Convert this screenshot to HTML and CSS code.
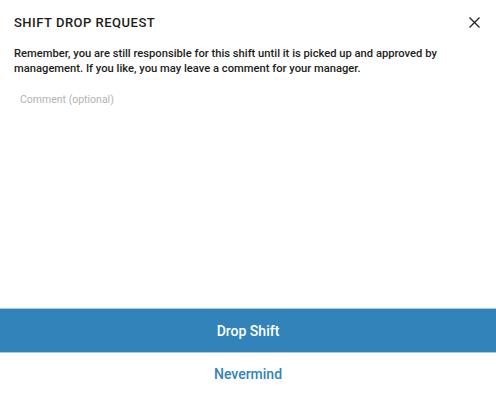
FILE: index.html
```html
<!DOCTYPE html>
<html lang="en">
<head>
    <meta charset="UTF-8">
    <meta name="viewport" content="width=device-width, initial-scale=1.0">
    <title>Shift Drop Request</title>
    <link rel="stylesheet" href="styles.css">
</head>
<body>
    <div class="dialog">
        <!-- Header -->
        <div class="dialog-header">
            <h2 class="dialog-title">Shift Drop Request</h2>
            <button class="close-button" aria-label="Close">
                <svg width="11" height="11" viewBox="0 0 11 11">
                    <path d="M0.5 0.5 L10.5 10.5 M10.5 0.5 L0.5 10.5" stroke="#222" stroke-width="1.3" fill="none"/>
                </svg>
            </button>
        </div>

        <p class="dialog-text">Remember, you are still responsible for this shift until it is picked up and approved by management. If you like, you may leave a comment for your manager.</p>

        <textarea class="comment-box" placeholder="Comment (optional)"></textarea>

        <!-- Actions -->
        <div class="dialog-actions">
            <button class="drop-button">Drop Shift</button>
            <button class="cancel-button">Nevermind</button>
        </div>
    </div>
</body>
</html>
```

FILE: styles.css
```css
body {
    font-family: Roboto, 'Open Sans', sans-serif;
    margin: 0;
    padding: 0;
    background-color: #fff;
    color: #222;
}

.dialog {
    display: flex;
    flex-direction: column;
    height: 395px;
}

/* Header */
.dialog-header {
    display: flex;
    justify-content: space-between;
    align-items: center;
    padding: 12px 16px 0 14px;
    height: 20px;
}

.dialog-title {
    margin: 0;
    font-size: 13px;
    font-weight: 500;
    letter-spacing: 0.5px;
    text-transform: uppercase;
    color: #1d1d1d;
}

.close-button {
    background: none;
    border: none;
    padding: 0;
    cursor: pointer;
    display: flex;
}

.dialog-text {
    margin: 14px 14px 0 14px;
    font-size: 11.2px;
    line-height: 15px;
    font-weight: 500;
    color: #1d1d1d;
}

/* Comment */
.comment-box {
    flex: 1;
    margin: 12px 14px 0 14px;
    padding: 4px 6px;
    border: none;
    outline: none;
    resize: none;
    font-family: inherit;
    font-size: 10.5px;
    line-height: 15px;
}

.comment-box::placeholder {
    color: #b3b3b3;
}

/* Actions */
.dialog-actions {
    display: flex;
    flex-direction: column;
}

.drop-button {
    height: 45px;
    border: none;
    border-top: 1px solid #a9cbe3;
    border-bottom: 1px solid #a9cbe3;
    background-color: #3183b9;
    color: #fff;
    font-family: inherit;
    font-size: 14px;
    font-weight: 500;
    cursor: pointer;
}

.cancel-button {
    height: 42px;
    border: none;
    background: #fff;
    color: #3183b9;
    font-family: inherit;
    font-size: 14px;
    font-weight: 500;
    cursor: pointer;
}
```
